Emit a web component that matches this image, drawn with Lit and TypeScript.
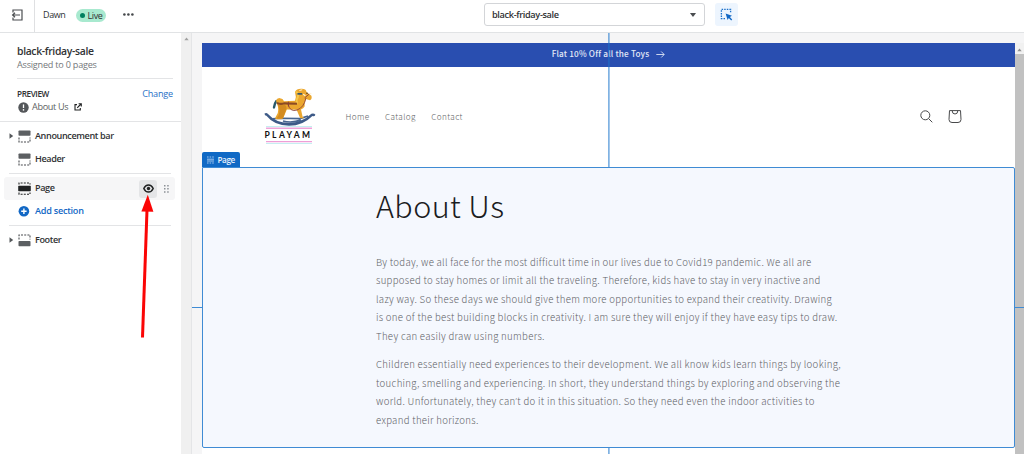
import { LitElement, html, css, svg } from "lit";
import { customElement, property } from "lit/decorators.js";

type IconKind = "top" | "mid" | "bottom";

@customElement("section-icon")
class SectionIcon extends LitElement {
  @property() kind: IconKind = "top";
  static styles = css`
    :host { display: block; width: 13px; height: 13px; }
    svg { display: block; }
  `;
  render() {
    const dash = "2 1.2";
    const art = {
      top: svg`<rect x="0.5" y="0.5" width="12" height="5.2" rx="0.8" fill="#5c5f62"/>
        <path d="M1 7.4V12H12V7.4" fill="none" stroke="#4a4d50" stroke-width="1.1" stroke-dasharray=${dash}/>`,
      mid: svg`<rect x="0.2" y="3.8" width="12.6" height="5.4" rx="0.6" fill="#202223"/>
        <path d="M1 2.6V1H12V2.6M1 10.6V12.2H12V10.6" fill="none" stroke="#202223" stroke-width="1.1" stroke-dasharray=${dash}/>`,
      bottom: svg`<rect x="0.5" y="7" width="12" height="5.2" rx="0.8" fill="#5c5f62"/>
        <path d="M1 5.4V1H12V5.4" fill="none" stroke="#4a4d50" stroke-width="1.1" stroke-dasharray=${dash}/>`,
    }[this.kind];
    return html`<svg width="13" height="13" viewBox="0 0 13 13">${art}</svg>`;
  }
}

@customElement("top-bar")
class TopBar extends LitElement {
  static styles = css`
    :host {
      display: flex; align-items: center; height: 32px; box-sizing: content-box;
      border-bottom: 1px solid #e1e3e5; background: #fff;
      font: 9px/14px "Open Sans", "Noto Sans", sans-serif; color: #303234;
    }
    .exit { width: 34px; height: 32px; border-right: 1px solid #dfe0e2; display: flex; align-items: center; justify-content: center; }
    .exit svg { margin-top: -3px; }
    .name { margin: -3px 0 0 8px; width: 33px; letter-spacing: -0.38px; }
    .live { display: flex; align-items: center; height: 13px; width: 30px; margin-right: 1px; box-sizing: border-box; padding-left: 3.5px; gap: 3px; margin-top: -1px; border-radius: 7px; background: #a8e9cf; letter-spacing: -0.4px; }
    .dot { width: 5px; height: 5px; border-radius: 50%; background: #007f5f; }
    .more { margin: -3px 0 0 16px; }
    .select { display: flex; align-items: center; justify-content: space-between; box-sizing: border-box; width: 221px; height: 23px; margin: -3px 0 0 350px; padding: 0 8px 0 7px; border: 1px solid #d3d5d8; border-radius: 3px; font-size: 9.2px; font-weight: 600; letter-spacing: -0.36px; }
    .inspect { display: flex; align-items: center; justify-content: center; width: 23px; height: 23px; margin: -3px 0 0 10px; border-radius: 3px; background: #edf5fe; }
    svg { display: block; }
  `;
  render() {
    return html`
      <div class="exit">
        <svg width="12" height="12" viewBox="0 0 12 12" fill="none" stroke="#4a4d50" stroke-width="1.2">
          <path d="M2 3.6V1H11V11H2V8.4M9 6H1.4M4 3.7L1.6 6L4 8.3"/>
        </svg>
      </div>
      <div class="name">Dawn</div>
      <div class="live"><span class="dot"></span>Live</div>
      <svg class="more" width="11" height="3" viewBox="0 0 11 3" fill="#45484b"><circle cx="1.4" cy="1.5" r="1.3"/><circle cx="5.4" cy="1.5" r="1.3"/><circle cx="9.4" cy="1.5" r="1.3"/></svg>
      <div class="select"><span>black-friday-sale</span>
        <svg width="6" height="4" viewBox="0 0 6 4" fill="#4a4d50"><path d="M0.4 0H5.6Q6 0 5.7 0.5L3.4 3.6Q3 4 2.6 3.6L0.3 0.5Q0 0 0.4 0Z"/></svg>
      </div>
      <div class="inspect">
        <svg width="13" height="13" viewBox="0 0 13 13"><path d="M5 10.6H1.4V1.4H10.6V5" fill="none" stroke="#1a70ca" stroke-width="1.3" stroke-dasharray="1.5 1.1"/><path d="M5.6 5.6L12 7.7L9.9 9L12.2 11.4L11.2 12.4L8.8 10.1L7.6 12Z" fill="#1268c5"/></svg>
      </div>`;
  }
}

@customElement("side-bar")
class SideBar extends LitElement {
  static styles = css`
    :host { display: flex; width: 191px; border-right: 1px solid #e4e5e7; background: #fff; font: 600 9.1px/14px "Open Sans", "Noto Sans", sans-serif; color: #303234; }
    .panel { width: 181px; }
    .scroll { width: 10px; background: #f0f0f0; display: flex; justify-content: center; padding-top: 4px; box-sizing: border-box; }
    svg { display: block; }
    .head { margin: 0 8px 0 17px; padding-top: 11px; height: 34px; border-bottom: 1px solid #e3e4e6; }
    .title { font-size: 10.4px; letter-spacing: -0.34px; }
    .sub { font-weight: 400; color: #74777a; letter-spacing: -0.22px; }
    .preview { padding: 8px 8px 0 17px; height: 34px; border-bottom: 1px solid #e3e4e6; }
    .line { display: flex; align-items: center; justify-content: space-between; height: 13px; }
    .label { font-size: 8.2px; letter-spacing: -0.4px; }
    .change { font-weight: 400; color: #2670c6; letter-spacing: -0.2px; }
    .about { display: flex; align-items: center; gap: 4px; padding-left: 1px; font-weight: 400; height: 14px; color: #5c5f62; letter-spacing: -0.34px; }
    .about span { margin-left: -1px; width: 38px; }
    .row { display: flex; align-items: center; height: 23px; margin: 0 6px 0 4px; padding-left: 5px; border-radius: 3px; box-sizing: border-box; }
    .caret { width: 9px; }
    .text { margin: -1px 0 0 4px; flex: 1; letter-spacing: -0.39px; }
    .active { background: #f6f6f7; }
    .eye { display: flex; align-items: center; justify-content: center; width: 18px; height: 18px; background: #e4e5e7; border-radius: 3px; }
    .grip { margin: 0 6px 0 7px; }
    .first { margin-top: 3px; }
    .rule { height: 1px; background: #e3e4e6; margin: 2px 10px 3px 9px; }
    .add { color: #1268c5; }
    .add .text { letter-spacing: -0.24px; }
    .row section-icon, .row .caret { margin-top: -1px; }
  `;
  caret(open: boolean) {
    return html`<div class="caret">${open ? html`<svg width="5" height="6" viewBox="0 0 5 6"><path d="M0.5 0.2L4.2 3L0.5 5.8Z" fill="#55585b"/></svg>` : ""}</div>`;
  }
  row(label: string, kind: IconKind, caret: boolean, cls = "") {
    return html`<div class="row ${cls}">${this.caret(caret)}<section-icon .kind=${kind}></section-icon><div class="text">${label}</div></div>`;
  }
  render() {
    return html`
      <div class="panel">
        <div class="head"><div class="title">black-friday-sale</div><div class="sub">Assigned to 0 pages</div></div>
        <div class="preview">
          <div class="line"><span class="label">PREVIEW</span><span class="change">Change</span></div>
          <div class="about">
            <svg width="11" height="11" viewBox="0 0 11 11"><circle cx="5.5" cy="5.5" r="5.2" fill="#54575a"/><path d="M5.5 2.4V6" stroke="#fff" stroke-width="1.3"/><circle cx="5.5" cy="7.9" r="0.8" fill="#fff"/></svg>
            <span>About Us</span>
            <svg width="8" height="8" viewBox="0 0 8 8" fill="none" stroke="#202223" stroke-width="1.1"><path d="M3 1.6H1V7H6.3V5M4.6 0.7H7.3V3.4M7 1L3.2 4.8"/></svg>
          </div>
        </div>
        ${this.row("Announcement bar", "top", true, "first")}
        ${this.row("Header", "top", false)}
        <div class="rule"></div>
        <div class="row active">
          ${this.caret(false)}<section-icon .kind=${"mid"}></section-icon><div class="text">Page</div>
          <div class="eye"><svg width="11" height="9" viewBox="0 0 11 9"><path d="M0.8 4.5Q2.4 1 5.5 1T10.2 4.5Q8.6 8 5.5 8T0.8 4.5Z" fill="none" stroke="#202223" stroke-width="1.5"/><circle cx="5.5" cy="4.5" r="1.7" fill="#202223"/></svg></div>
          <svg class="grip" width="5" height="8" viewBox="0 0 5 8" fill="#8c9196"><path d="M0 0h1.5v1.5H0zM3.2 0h1.5v1.5H3.2zM0 3.1h1.5v1.5H0zM3.2 3.1h1.5v1.5H3.2zM0 6.2h1.5v1.5H0zM3.2 6.2h1.5v1.5H3.2z"/></svg>
        </div>
        <div class="row add">
          ${this.caret(false)}
          <svg width="13" height="13" viewBox="0 0 13 13"><circle cx="5.9" cy="6.3" r="5.3" fill="#1268c5"/><path d="M5.9 3.6V9M3.2 6.3H8.6" stroke="#fff" stroke-width="1.4"/></svg>
          <div class="text">Add section</div>
        </div>
        <div class="rule"></div>
        ${this.row("Footer", "bottom", true)}
      </div>
      <div class="scroll"><svg width="5" height="4" viewBox="0 0 5 4"><path d="M0.3 3.2L2.5 0.6L4.7 3.2Z" fill="#a0a0a0"/></svg></div>`;
  }
}

@customElement("toy-logo")
class ToyLogo extends LitElement {
  static styles = css`
    :host { display: flex; flex-direction: column; width: 52px; }
    svg { display: block; }
    .bars { margin-left: 2px; }
    .word { font: 700 8.5px/12px Lato, sans-serif; color: #111; letter-spacing: 2.35px; margin-left: 1px; white-space: nowrap; height: 12px; }
  `;
  render() {
    return html`
      <svg width="52" height="38" viewBox="0 0 52 39" preserveAspectRatio="none">
        <path d="M0.5 26.2Q2.5 25.2 4 26.6Q12 35.8 25 35.6Q38 35.6 47.4 26.4Q50 25.6 51.4 27.4Q50.6 29.6 48.4 28.8Q39 38.8 25 38.8Q10 38.6 2.4 28.6Q0.6 28.4 0.5 26.2Z" fill="#3d5a87"/>
        <path d="M8 31.6L17 31L36 31.4L44 28.8M19 33.8Q27 36.4 37 33" stroke="#47658f" stroke-width="1.7" fill="none"/>
        <path d="M12.4 13.4Q10.4 16 10 20" stroke="#285a6b" stroke-width="2.4" fill="none" stroke-linecap="round"/>
        <path d="M12 13Q13 10 16 10.4Q19 10.6 20 13.5L31 13.2Q32.6 9 31 4Q32.4 0.8 37 0.7Q42 0.4 42.5 4L47.4 8Q48.4 11.4 46 12.6L41.8 11.4Q40.4 14 40.6 19Q39.4 21 37 22L38.6 29.6L40.4 31H36.2L32.6 22.4L22.8 22L19.4 30.6L17.4 32.2H12.4L11 31L13.8 25.6Q15.2 20 12 13Z" fill="#eba72f"/>
        <path d="M12.4 15L20 17Q22.4 17.4 22.6 21L18.8 31.6H12.4Q18.6 24 12.4 15Z" fill="#d38c21"/>
        <path d="M31.4 4Q35 4 33.8 9.6Q32 11.6 33 16" stroke="#f6c84c" stroke-width="1.8" fill="none"/>
        <path d="M13 15.3Q16 17 20 15.8L33 16.2" stroke="#8c4b24" stroke-width="2.1" fill="none"/>
        <path d="M24 16.5Q26 25 33 22.6Q40 20 42 10.2M40.6 10.2L45.2 6.2M24.4 14V19" stroke="#8d3f35" stroke-width="0.9" fill="none"/>
        <path d="M33.4 6H38.2" stroke="#38586c" stroke-width="1.8"/>
        <path d="M35.4 2.6L38.2 1.8" stroke="#fff3c8" stroke-width="1"/>
        <path d="M39.2 6.4L41.4 8M46 5.4L47.4 6" stroke="#fff2d6" stroke-width="1.1"/>
        <circle cx="43" cy="5.4" r="0.8" fill="#463526"/>
      </svg>
      <svg class="bars" width="46" height="3"><path d="M0 0.5H46" stroke="#c5eef1"/><path d="M0 2.2H46" stroke="#eea3d9" stroke-width="1.4"/></svg>
      <div class="word">PLAYAM</div>
      <svg class="bars" width="46" height="3"><path d="M0 0.6H46" stroke="#ee9ed7" stroke-width="1.2"/><path d="M0 2.5H46" stroke="#c5eef1"/></svg>`;
  }
}

@customElement("store-preview")
class StorePreview extends LitElement {
  static styles = css`
    :host { position: relative; display: flex; flex: 1; background: #f5f5f6; font-family: "Noto Sans CJK SC", "Noto Sans CJK JP", sans-serif; overflow: hidden; padding: 10px 0 0 10px; box-sizing: border-box; }
    svg { display: block; }
    .page { display: flex; flex-direction: column; width: 813px; background: #fff; }
    .promo { display: flex; align-items: center; justify-content: center; gap: 7px; height: 24px; background: #294eb0; color: #e3e9f7; font-size: 8.2px; line-height: 22px; font-weight: 500; letter-spacing: 0.18px; box-sizing: border-box; }
    .promo span { margin-top: -4px; }
    .promo svg { margin-top: -1px; }
    .header { display: flex; align-items: center; height: 85px; padding: 0 53px 0 61.5px; box-sizing: border-box; }
    .logo { margin-top: 13px; }
    .nav { display: flex; gap: 15.3px; margin-left: 30px; flex: 1; font-size: 8.2px; line-height: 14px; letter-spacing: 0.4px; color: #626365; padding-top: 12px; font-weight: 300; }
    .icons { display: flex; gap: 15px; padding-top: 14px; }
    .tag { display: flex; align-items: center; gap: 3.5px; width: 38px; height: 15px; padding-left: 5px; box-sizing: border-box; background: #1069c5; color: #e9f2fc; border-radius: 2px 2px 0 0; font: 600 8.2px/14px "Open Sans", sans-serif; letter-spacing: -0.45px; }
    .section { height: 281px; box-sizing: border-box; border: 1px solid #3f8bd4; border-radius: 0 2px 2px 2px; background: #f5f8fe; padding: 15px 0 0 173px; position: relative; z-index: 1; }
    h1 { margin: 0; font-size: 30.5px; line-height: 44px; font-weight: 300; letter-spacing: 0.4px; color: #1b1c1e; }
    p { margin: 0 0 9.5px; font-size: 9.6px; line-height: 18.6px; font-weight: 300; letter-spacing: 0.312px; color: #5f6267; white-space: nowrap; }
    h1 + p { margin-top: 25.5px; }
    .apos { font-family: "Open Sans", sans-serif; line-height: 1; }
    .bar { width: 9px; background: #c1c1c1; }
    .bar div { height: 11px; background: #f1f1f1; padding: 5px 0 0 2px; box-sizing: border-box; }
    .vline { position: absolute; left: 416px; top: 0; bottom: 0; width: 2px; background: linear-gradient(90deg, rgba(24, 115, 203, 0.55) 50%, rgba(24, 115, 203, 0.4) 50%); }
    .hline { position: absolute; left: 0; right: 0; top: 273.5px; height: 1px; background: #3f8bd4; }
  `;
  render() {
    return html`
      <div class="hline"></div>
      <div class="page">
        <div class="promo"><span>Flat 10% Off all the Toys</span>
          <svg width="9" height="7" viewBox="0 0 9 7" fill="none" stroke="#dce4f5" stroke-width="0.9"><path d="M0.3 3.5H8M5.2 0.5L8.2 3.5L5.2 6.5"/></svg>
        </div>
        <div class="header">
          <toy-logo class="logo"></toy-logo>
          <div class="nav"><span>Home</span><span>Catalog</span><span>Contact</span></div>
          <div class="icons">
            <svg width="13" height="13" viewBox="0 0 13 13" fill="none" stroke="#48494b"><circle cx="5.3" cy="5.3" r="4.5"/><path d="M8.6 8.6L12.3 12.3"/></svg>
            <svg width="14" height="13" viewBox="0 0 14 13" fill="none" stroke="#48494b"><path d="M1.5 0.6H12.5L13 9.5Q13 12.5 10 12.5H4Q1 12.5 1 9.5Z"/><path d="M4.2 0.8Q4.2 4 7 4T9.8 0.8"/></svg>
          </div>
        </div>
        <div class="tag"><svg width="7" height="8" viewBox="0 0 7 8" stroke="#b5d3f2" fill="none" stroke-width="0.9"><path d="M0 1H7M0 7H7" stroke-dasharray="1.6 1"/><path d="M0 3.2H7M0 5H7"/></svg>Page</div>
        <div class="section">
          <h1>About Us</h1>
          <p>By today, we all face for the most difficult time in our lives due to Covid19 pandemic. We all are<br>supposed to stay homes or limit all the traveling. Therefore, kids have to stay in very inactive and<br>lazy way. So these days we should give them more opportunities to expand their creativity. Drawing<br>is one of the best building blocks in creativity. I am sure they will enjoy if they have easy tips to draw.<br>They can easily draw using numbers.</p>
          <p>Children essentially need experiences to their development. We all know kids learn things by looking,<br>touching, smelling and experiencing. In short, they understand things by exploring and observing the<br>world. Unfortunately, they can<span class="apos">’</span>t do it in this situation. So they need even the indoor activities to<br>expand their horizons.</p>
        </div>
      </div>
      <div class="bar"><div><svg width="5" height="4" viewBox="0 0 5 4"><path d="M0.3 3.2L2.5 0.6L4.7 3.2Z" fill="#909090"/></svg></div></div>
      <div class="vline"></div>`;
  }
}

@customElement("app-root")
class AppRoot extends LitElement {
  static styles = css`
    :host { display: flex; flex-direction: column; position: relative; width: 1024px; height: 454px; overflow: hidden; background: #fff; }
    .body { display: flex; flex: 1; min-height: 0; }
    .pointer { position: absolute; left: 136px; top: 194px; pointer-events: none; }
  `;
  render() {
    return html`
      <top-bar></top-bar>
      <div class="body"><side-bar></side-bar><store-preview></store-preview></div>
      <svg class="pointer" width="20" height="148" viewBox="0 0 20 148">
        <path d="M6.5 143.5L11 16" stroke="#fb0505" stroke-width="3"/>
        <path d="M11.8 0.8L17.4 17.8L5.4 17.4Z" fill="#fb0505"/>
      </svg>`;
  }
}
